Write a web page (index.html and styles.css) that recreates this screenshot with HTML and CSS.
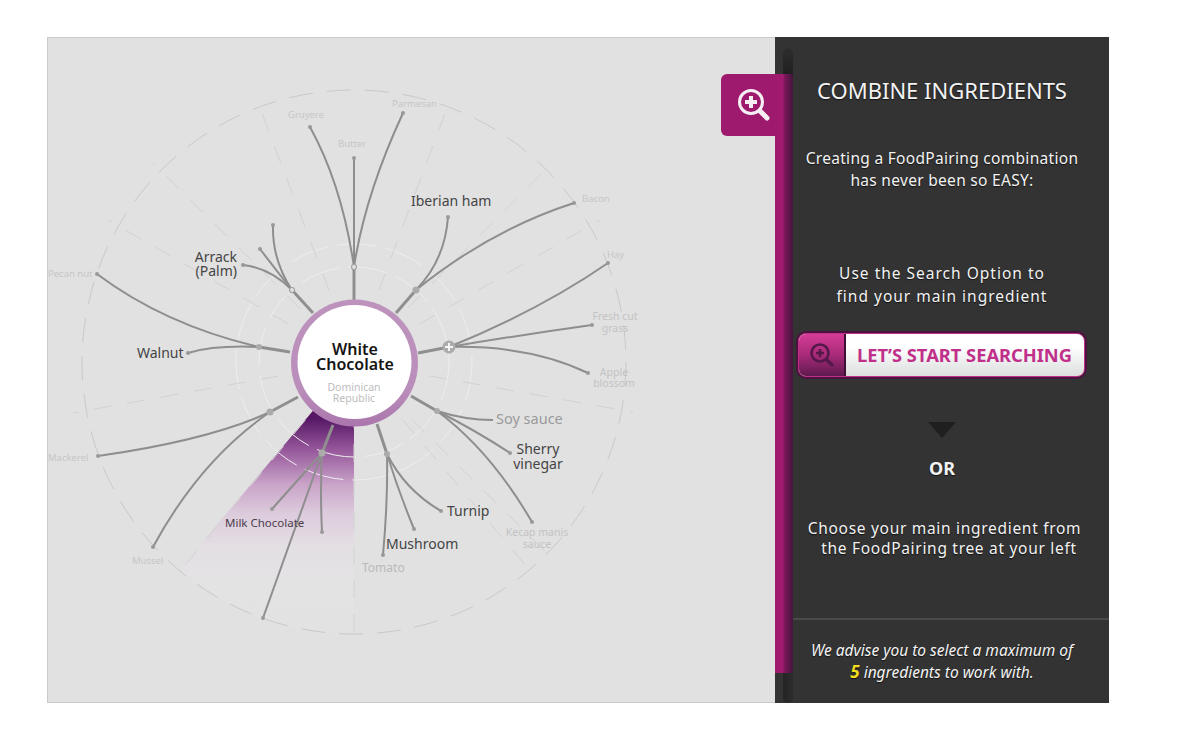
FILE: index.html
```html
<!DOCTYPE html>
<html lang="en">
<head>
    <meta charset="UTF-8">
    <meta name="viewport" content="width=device-width, initial-scale=1.0">
    <title>FoodPairing - Combine Ingredients</title>
    <link rel="stylesheet" href="styles.css">
</head>
<body>
    <div class="frame">
        <div class="tree-panel">
            <svg class="tree" viewBox="48 38 727 664" width="727" height="664">
                <defs>
                    <linearGradient id="wedgeFill" gradientUnits="userSpaceOnUse" x1="0" y1="418" x2="0" y2="625">
                        <stop offset="0" stop-color="#551764"/>
                        <stop offset="0.15" stop-color="#95569a"/>
                        <stop offset="0.32" stop-color="#c9a3c8"/>
                        <stop offset="0.46" stop-color="#dccbdc"/>
                        <stop offset="0.62" stop-color="#e3dfe3"/>
                        <stop offset="0.8" stop-color="#e4e3e4"/>
                        <stop offset="1" stop-color="#e2e2e2"/>
                    </linearGradient>
                    <linearGradient id="ringFill" x1="0" y1="0" x2="0" y2="1">
                        <stop offset="0" stop-color="#bd93bd"/>
                        <stop offset="0.7" stop-color="#ba8ebb"/>
                        <stop offset="1" stop-color="#aa75ac"/>
                    </linearGradient>
                </defs>

                <!-- selected sector -->
                <path class="wedge" d="M354 362 L354 634 A272 272 0 0 1 179 570 Z"/>

                <!-- rings -->
                <circle class="ring-outer" cx="354" cy="362" r="272"/>
                <circle class="ring-inner" cx="354" cy="362" r="95"/>
                <circle class="ring-inner" cx="354" cy="362" r="118"/>

                <!-- sector borders -->
                <path class="spoke" d="M341 322 L257 100"/>
                <path class="spoke" d="M324 332 L153 163"/>
                <path class="spoke" d="M318 341 L108 220"/>
                <path class="spoke" d="M312 370 L73 413"/>
                <path class="spoke" d="M327 394 L180 571"/>
                <path class="spoke" d="M354 410 L354 649"/>
                <path class="spoke" d="M381 394 L527 567"/>
                <path class="spoke" d="M387 395 L557 563"/>
                <path class="spoke" d="M396 370 L633 412"/>
                <path class="spoke" d="M390 341 L600 220"/>
                <path class="spoke" d="M384 332 L550 165"/>
                <path class="spoke" d="M367 322 L450 100"/>

                <!-- branches -->
                <path class="stem" d="M354 300 L354 267"/>
                <path class="stem" d="M313 313 L292 290"/>
                <path class="stem" d="M290 352 L259 347"/>
                <path class="stem" d="M298 397 L270 412"/>
                <path class="stem" d="M333 425 L322 453"/>
                <path class="stem" d="M377 424 L387 454"/>
                <path class="stem" d="M411 396 L437 411"/>
                <path class="stem" d="M418 353 L449 347"/>
                <path class="stem" d="M396 313 L416 290"/>

                <path class="branch" d="M354 267 Q342 185 310 127"/>
                <path class="branch" d="M354 267 L354 158"/>
                <path class="branch" d="M354 267 Q365 195 403 113"/>
                <path class="branch" d="M292 290 Q270 268 243 265"/>
                <path class="branch" d="M292 290 Q276 270 260 249"/>
                <path class="branch" d="M292 290 Q272 260 273 225"/>
                <path class="branch" d="M259 347 Q165 325 97 274"/>
                <path class="branch" d="M259 347 Q215 345 188 353"/>
                <path class="branch" d="M270 412 Q210 440 98 456"/>
                <path class="branch" d="M270 412 Q200 460 153 547"/>
                <path class="branch" d="M322 453 L272 509"/>
                <path class="branch" d="M322 453 Q320 490 322 532"/>
                <path class="branch" d="M322 453 L263 618"/>
                <path class="branch" d="M387 454 Q388 500 383 555"/>
                <path class="branch" d="M387 454 Q398 490 414 529"/>
                <path class="branch" d="M387 454 Q405 490 441 511"/>
                <path class="branch" d="M437 411 Q465 420 493 420"/>
                <path class="branch" d="M437 411 Q475 430 510 453"/>
                <path class="branch" d="M437 411 Q490 450 532 522"/>
                <path class="branch" d="M449 347 Q530 345 588 373"/>
                <path class="branch" d="M449 347 Q520 335 592 325"/>
                <path class="branch" d="M449 347 Q540 310 608 263"/>
                <path class="branch" d="M416 290 Q445 260 448 217"/>
                <path class="branch" d="M416 290 Q490 230 574 203"/>

                <!-- leaf dots -->
                <g class="leaf">
                    <circle cx="310" cy="127" r="2"/><circle cx="354" cy="158" r="2"/><circle cx="403" cy="113" r="2"/>
                    <circle cx="243" cy="265" r="2"/><circle cx="260" cy="249" r="2"/><circle cx="273" cy="225" r="2"/>
                    <circle cx="97" cy="274" r="2"/><circle cx="188" cy="353" r="2"/><circle cx="98" cy="456" r="2"/>
                    <circle cx="153" cy="547" r="2"/><circle cx="272" cy="509" r="2"/><circle cx="322" cy="532" r="2"/>
                    <circle cx="263" cy="618" r="2"/><circle cx="383" cy="555" r="2"/><circle cx="414" cy="529" r="2"/>
                    <circle cx="441" cy="511" r="2"/><circle cx="510" cy="453" r="2"/><circle cx="532" cy="522" r="2"/>
                    <circle cx="588" cy="373" r="2"/><circle cx="592" cy="325" r="2"/><circle cx="608" cy="263" r="2"/>
                    <circle cx="448" cy="217" r="2"/><circle cx="574" cy="203" r="2"/>
                </g>

                <!-- junction nodes -->
                <circle class="node-open" cx="354" cy="267" r="2.5"/>
                <circle class="node-open" cx="292" cy="290" r="2.5"/>
                <circle class="node" cx="259" cy="347" r="3"/>
                <circle class="node" cx="270" cy="412" r="3.5"/>
                <circle class="node" cx="322" cy="453" r="3.5"/>
                <circle class="node" cx="387" cy="454" r="3"/>
                <circle class="node" cx="437" cy="411" r="3"/>
                <circle class="node" cx="416" cy="290" r="3.5"/>
                <circle class="node" cx="449" cy="347" r="6.5"/>
                <path class="node-plus" d="M445 347 H453 M449 343 V351"/>

                <!-- centre -->
                <circle class="hub-ring" cx="354.5" cy="363" r="63.5"/>
                <circle class="hub" cx="354.5" cy="362" r="57"/>
                <text class="hub-title" x="355" y="355">White</text>
                <text class="hub-title" x="355" y="370">Chocolate</text>
                <text class="hub-origin" x="354" y="391">Dominican</text>
                <text class="hub-origin" x="354" y="402">Republic</text>

                <!-- labels -->
                <text class="label label-dark" x="411" y="206">Iberian ham</text>
                <text class="label label-dark label-end" x="237" y="262">Arrack</text>
                <text class="label label-dark label-end" x="237" y="276">(Palm)</text>
                <text class="label label-dark" x="137" y="358">Walnut</text>
                <text class="label label-mid" x="496" y="424">Soy sauce</text>
                <text class="label label-dark label-mid-anchor" x="538" y="454">Sherry</text>
                <text class="label label-dark label-mid-anchor" x="538" y="469">vinegar</text>
                <text class="label label-dark" x="447" y="516">Turnip</text>
                <text class="label label-dark" x="386" y="549">Mushroom</text>
                <text class="label label-sector" x="225" y="527">Milk Chocolate</text>
                <text class="label label-tomato" x="362" y="572">Tomato</text>
                <text class="label label-faint label-mid-anchor" x="537" y="536">Kecap manis</text>
                <text class="label label-faint label-mid-anchor" x="537" y="548">sauce</text>
                <text class="label label-faint label-mid-anchor" x="614" y="376">Apple</text>
                <text class="label label-faint label-mid-anchor" x="614" y="387">blossom</text>
                <text class="label label-faint label-mid-anchor" x="615" y="320">Fresh cut</text>
                <text class="label label-faint label-mid-anchor" x="615" y="332">grass</text>
                <text class="label label-fainter" x="607" y="258">Hay</text>
                <text class="label label-fainter" x="582" y="202">Bacon</text>
                <text class="label label-fainter" x="392" y="107">Parmesan</text>
                <text class="label label-fainter" x="288" y="118">Gruyere</text>
                <text class="label label-fainter" x="338" y="147">Butter</text>
                <text class="label label-fainter" x="48" y="277">Pecan nut</text>
                <text class="label label-fainter" x="48" y="461">Mackerel</text>
                <text class="label label-fainter" x="132" y="564">Mussel</text>
            </svg>
        </div>

        <div class="side-panel">
            <div class="strip">
                <div class="strip-cap strip-cap-top"></div>
                <div class="strip-body">
                    <div class="search-tab">
                        <svg class="tab-icon" viewBox="0 0 36 36" width="36" height="36">
                            <circle cx="15" cy="14" r="11.5" fill="none" stroke="#f5eff3" stroke-width="3"/>
                            <path d="M9 14 H21 M15 8 V20" stroke="#f5eff3" stroke-width="4" fill="none"/>
                            <path d="M24 23 L31 30" stroke="#f5eff3" stroke-width="5" stroke-linecap="round"/>
                        </svg>
                    </div>
                </div>
                <div class="strip-cap strip-cap-bottom"></div>
            </div>

            <div class="side-content">
                <div class="steps">
                    <h1>COMBINE INGREDIENTS</h1>
                    <p class="intro">Creating a FoodPairing combination<br>has never been so EASY:</p>
                    <p class="step-search">Use the Search Option to<br>find your main ingredient</p>
                    <button class="start-btn" type="button">
                        <span class="start-btn-icon">
                            <svg viewBox="0 0 30 30" width="30" height="30">
                                <circle cx="13" cy="13" r="8.5" fill="none" stroke="#55184b" stroke-width="2.6"/>
                                <path d="M9 13 H17 M13 9 V17" stroke="#55184b" stroke-width="2.6" fill="none"/>
                                <path d="M20 20 L25 25" stroke="#55184b" stroke-width="3.2" stroke-linecap="round"/>
                            </svg>
                        </span>
                        <span class="start-btn-text">LET’S START SEARCHING</span>
                    </button>
                    <div class="arrow-down"></div>
                    <p class="or">OR</p>
                    <p class="step-tree">Choose your main ingredient from<br><span class="nudge">the FoodPairing tree at your left</span></p>
                </div>
                <div class="advice">
                    <p>We advise you to select a maximum of<br><b>5</b> ingredients to work with.</p>
                </div>
            </div>
        </div>
    </div>
</body>
</html>
```

FILE: styles.css
```css
body {
    margin: 0;
    padding: 37px 0 0 47px;
    background-color: #fff;
    font-family: "Noto Sans", Arial, sans-serif;
}
.frame {
    display: flex;
    width: 1062px;
    height: 666px;
}

/* tree */
.tree-panel {
    width: 728px;
    box-sizing: border-box;
    border: 1px solid #cbcbcb;
    border-right: none;
    background-color: #e1e1e1;
}
.tree {
    display: block;
}
.wedge {
    fill: url(#wedgeFill);
}
.ring-outer {
    fill: none;
    stroke: #c9c9c9;
    stroke-width: 1;
    stroke-dasharray: 24 14;
}
.ring-inner {
    fill: none;
    stroke: #eeeeee;
    stroke-width: 1;
    stroke-dasharray: 40 9;
}
.spoke {
    fill: none;
    stroke: #d2d2d2;
    stroke-width: 1;
    stroke-dasharray: 18 16;
}
.stem {
    fill: none;
    stroke: #8f8f8f;
    stroke-width: 3;
}
.branch {
    fill: none;
    stroke: #8e8e8e;
    stroke-width: 2;
}
.leaf {
    fill: #999;
}
.node {
    fill: #ababab;
}
.node-open {
    fill: #e1e1e1;
    stroke: #a2a2a2;
    stroke-width: 1.2;
}
.node-plus {
    fill: none;
    stroke: #f4f4f4;
    stroke-width: 2;
}
.hub-ring {
    fill: url(#ringFill);
}
.hub {
    fill: #fff;
}
.hub-title {
    font-size: 16px;
    font-weight: 600;
    fill: #151515;
    text-anchor: middle;
}
.hub-origin {
    font-size: 10.5px;
    fill: #bdbdbd;
    text-anchor: middle;
}
.label {
    font-size: 11px;
}
.label-end {
    text-anchor: end;
}
.label-mid-anchor {
    text-anchor: middle;
}
.label-dark {
    font-size: 14px;
    fill: #444;
}
.label-mid {
    font-size: 14.5px;
    fill: #9a9a9a;
}
.label-sector {
    font-size: 11.5px;
    fill: #4c3c4c;
}
.label-tomato {
    font-size: 12px;
    fill: #b9b9b9;
}
.label-faint {
    font-size: 10.5px;
    fill: #c3c3c3;
}
.label-fainter {
    font-size: 9.5px;
    fill: #c6c6c6;
}

/* side panel */
.side-panel {
    display: flex;
    width: 334px;
    background-color: #333;
}
.strip {
    display: flex;
    flex-direction: column;
    width: 18px;
    padding-top: 11px;
}
.strip-cap {
    width: 10px;
    margin-left: 8px;
    background: linear-gradient(to right, #242424, #2c2c2c);
}
.strip-cap-top {
    height: 26px;
    border-radius: 5px 5px 0 0;
    background: linear-gradient(to bottom, #2e2e2e, #1f1f1f);
}
.strip-cap-bottom {
    height: 30px;
    border-radius: 0 0 5px 5px;
}
.strip-body {
    position: relative;
    flex: 1;
    background: linear-gradient(to right, #a01a70 0, #a01a70 42%, #7a1759 55%, #43163b 100%);
}
.search-tab {
    position: absolute;
    left: -54px;
    top: 0;
    display: flex;
    justify-content: center;
    align-items: center;
    width: 54px;
    height: 62px;
    padding-left: 12px;
    box-sizing: border-box;
    border-radius: 6px 0 0 6px;
    background-color: #9e1a6e;
}
.tab-icon {
    display: block;
    margin-top: 2px;
}
.side-content {
    display: flex;
    flex-direction: column;
    flex: 1;
}
.steps {
    flex: 1;
    padding-right: 18px;
    color: #f3f3f3;
    text-align: center;
    text-shadow: 0 1px 1px #111;
}
h1 {
    margin: 38px 0 0;
    font-size: 22px;
    font-weight: 400;
    line-height: 30px;
}
p {
    margin: 0;
}
.intro {
    margin-top: 42px;
    font-size: 15.5px;
    line-height: 22px;
    letter-spacing: 0.3px;
}
.step-search {
    margin-top: 71px;
    font-size: 15.5px;
    line-height: 23px;
    letter-spacing: 1px;
}
.start-btn {
    display: flex;
    width: 287px;
    height: 44px;
    margin: 25px 0 0 5px;
    padding: 0;
    box-sizing: border-box;
    border: 1px solid #c02f87;
    border-radius: 8px;
    box-shadow: 0 0 0 2px #4a1340;
    overflow: hidden;
    background: linear-gradient(to bottom, #fff 30%, #dcdede 100%);
    font-family: inherit;
    cursor: pointer;
}
.start-btn-icon {
    display: flex;
    justify-content: center;
    align-items: center;
    width: 45px;
    height: 100%;
    flex-shrink: 0;
    border-right: 2px solid #3e1034;
    background: linear-gradient(to bottom, #d53c96 0, #a82a78 50%, #5f1a4f 100%);
}
.start-btn-text {
    margin-left: 11px;
    color: #c0308a;
    font-size: 18.3px;
    font-weight: 700;
    line-height: 42px;
    text-shadow: none;
    white-space: nowrap;
}
.arrow-down {
    width: 0;
    height: 0;
    margin: 45px auto 0;
    border-left: 14px solid transparent;
    border-right: 14px solid transparent;
    border-top: 16px solid #1f1f1f;
}
.or {
    margin-top: 17px;
    font-size: 18px;
    font-weight: 700;
    line-height: 26px;
}
.step-tree {
    margin-top: 37px;
    padding-left: 5px;
    font-size: 15.5px;
    line-height: 20px;
    letter-spacing: 0.7px;
}
.nudge {
    margin-left: 9px;
}
.advice {
    height: 85px;
    padding: 19px 18px 0 0;
    box-sizing: border-box;
    border-top: 2px solid #4a4a4a;
    color: #f3f3f3;
    font-size: 15.5px;
    font-style: italic;
    line-height: 22px;
    text-align: center;
    text-shadow: 0 1px 1px #111;
}
.advice b {
    color: #f2dc1e;
    font-size: 17px;
}
```
